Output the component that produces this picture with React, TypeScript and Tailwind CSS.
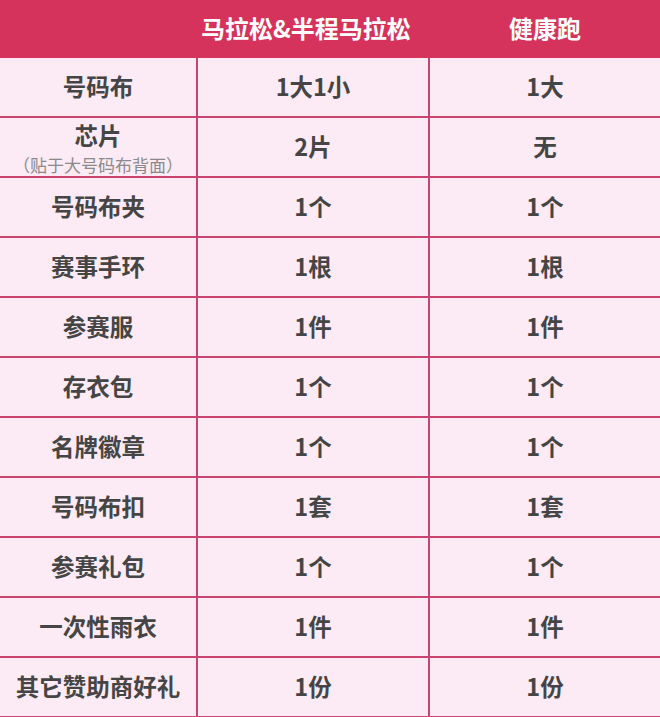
import React from "react";

const rows: [string, string, string][] = [
  ["号码布", "1大1小", "1大"],
  ["芯片", "2片", "无"],
  ["号码布夹", "1个", "1个"],
  ["赛事手环", "1根", "1根"],
  ["参赛服", "1件", "1件"],
  ["存衣包", "1个", "1个"],
  ["名牌徽章", "1个", "1个"],
  ["号码布扣", "1套", "1套"],
  ["参赛礼包", "1个", "1个"],
  ["一次性雨衣", "1件", "1件"],
  ["其它赞助商好礼", "1份", "1份"],
];

export default function App() {
  return (
    <div
      className="w-[660px] h-[717px] overflow-hidden bg-[#fcebf4]"
      style={{ fontFamily: '"Noto Sans CJK SC", "Noto Sans", sans-serif' }}
    >
      <div className="grid grid-cols-[198px_232px_230px] h-[58px] bg-[#d6335c] text-white font-bold text-[24px]">
        <div />
        <div className="flex items-center justify-center pr-[16px] pb-[2px]">马拉松&amp;半程马拉松</div>
        <div className="flex items-center justify-center pb-[2px]">健康跑</div>
      </div>
      {rows.map(([a, b, c], i) => (
        <div
          key={i}
          className="grid grid-cols-[198px_232px_230px] h-[60px] border-b-2 border-[#c9456f] text-[#454545] font-bold text-[23.5px]"
        >
          {a === "芯片" ? (
            <div className="border-r-2 border-[#c9456f] flex flex-col items-center pt-[3px] overflow-hidden">
              <div className="leading-[28px]">{a}</div>
              <div className="text-[17px] font-normal text-[#8a8a8a] leading-[20px] mt-[6px] whitespace-nowrap">（贴于大号码布背面）</div>
            </div>
          ) : (
            <div className="border-r-2 border-[#c9456f] flex items-center justify-center">{a}</div>
          )}
          <div className="border-r-2 border-[#c9456f] flex items-center justify-center">{b}</div>
          <div className="flex items-center justify-center">{c}</div>
        </div>
      ))}
    </div>
  );
}
